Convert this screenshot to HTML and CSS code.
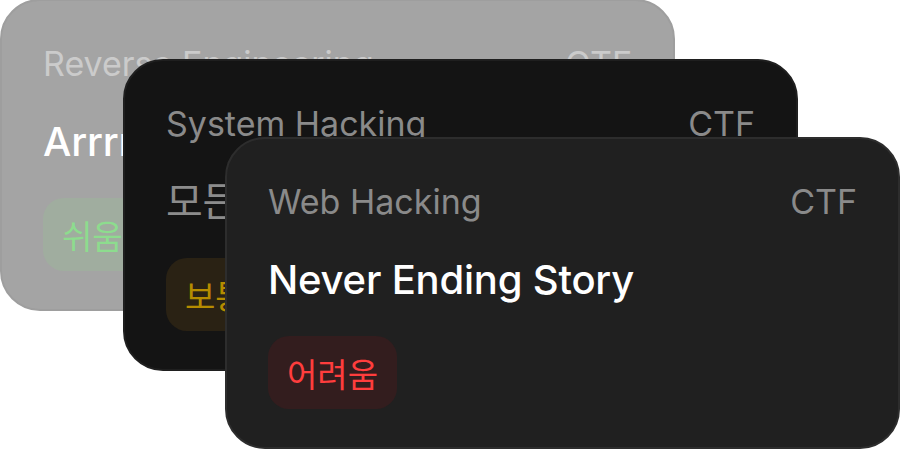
FILE: index.html
```html
<!DOCTYPE html>
<html lang="ko">
<head>
<meta charset="utf-8">
<link rel="stylesheet" href="styles.css">
</head>
<body>
<div class="stack">
  <div class="card card-back">
    <div class="card-head"><span>Reverse Engineering</span><span>CTF</span></div>
    <div class="card-title">Arrrrrrrrr</div>
    <div><span class="badge badge-easy">쉬움</span></div>
  </div>
  <div class="card card-mid">
    <div class="card-head"><span>System Hacking</span><span>CTF</span></div>
    <div class="card-title">모든 길은 로마로</div>
    <div><span class="badge badge-normal">보통</span></div>
  </div>
  <div class="card card-front">
    <div class="card-head"><span>Web Hacking</span><span>CTF</span></div>
    <div class="card-title">Never Ending Story</div>
    <div><span class="badge badge-hard">어려움</span></div>
  </div>
</div>
</body>
</html>
```
FILE: styles.css
```css
html, body {
  margin: 0;
  padding: 0;
  background: #ffffff;
}
body {
  width: 900px;
  height: 450px;
  overflow: hidden;
  font-family: Inter, "Noto Sans CJK KR", sans-serif;
}
.stack {
  position: relative;
  width: 900px;
  height: 450px;
}
.card {
  position: absolute;
  box-sizing: border-box;
  width: 675px;
  height: 312px;
  border-radius: 40px;
  border: 2px solid transparent;
  padding: 39px 41px 0 41px;
  display: flex;
  flex-direction: column;
  gap: 30px;
  overflow: hidden;
}
.card-back {
  left: 0;
  top: -1px;
  background: #a4a4a4;
  border-color: #9e9e9e;
}
.card-mid {
  left: 123px;
  top: 59px;
  background: #141414;
  border-color: #1f1f1f;
}
.card-front {
  left: 225px;
  top: 137px;
  background: #202020;
  border-color: #2d2d2d;
}
.card-head {
  display: flex;
  justify-content: space-between;
  font-size: 34px;
  line-height: 48px;
  color: #8a8a8a;
}
.card-title {
  font-size: 40px;
  line-height: 48px;
  font-weight: 500;
  letter-spacing: -0.2px;
  color: #ffffff;
  white-space: nowrap;
}
.card-back .card-head { color: #cbcbcb; }
.card-mid .card-title { color: #8c8c8c; font-weight: 400; }
.badge {
  display: inline-flex;
  align-items: center;
  height: 73px;
  margin-top: 2px;
  padding: 0 19px;
  border-radius: 21px;
  font-size: 33px;
  font-family: "Noto Sans CJK KR", sans-serif;
}
.badge-easy { background: #a0ad9f; color: #8ddc8e; }
.badge-normal { background: #2a2214; color: #b58c00; }
.badge-hard { background: #331d1e; color: #ff3d3d; }
```
